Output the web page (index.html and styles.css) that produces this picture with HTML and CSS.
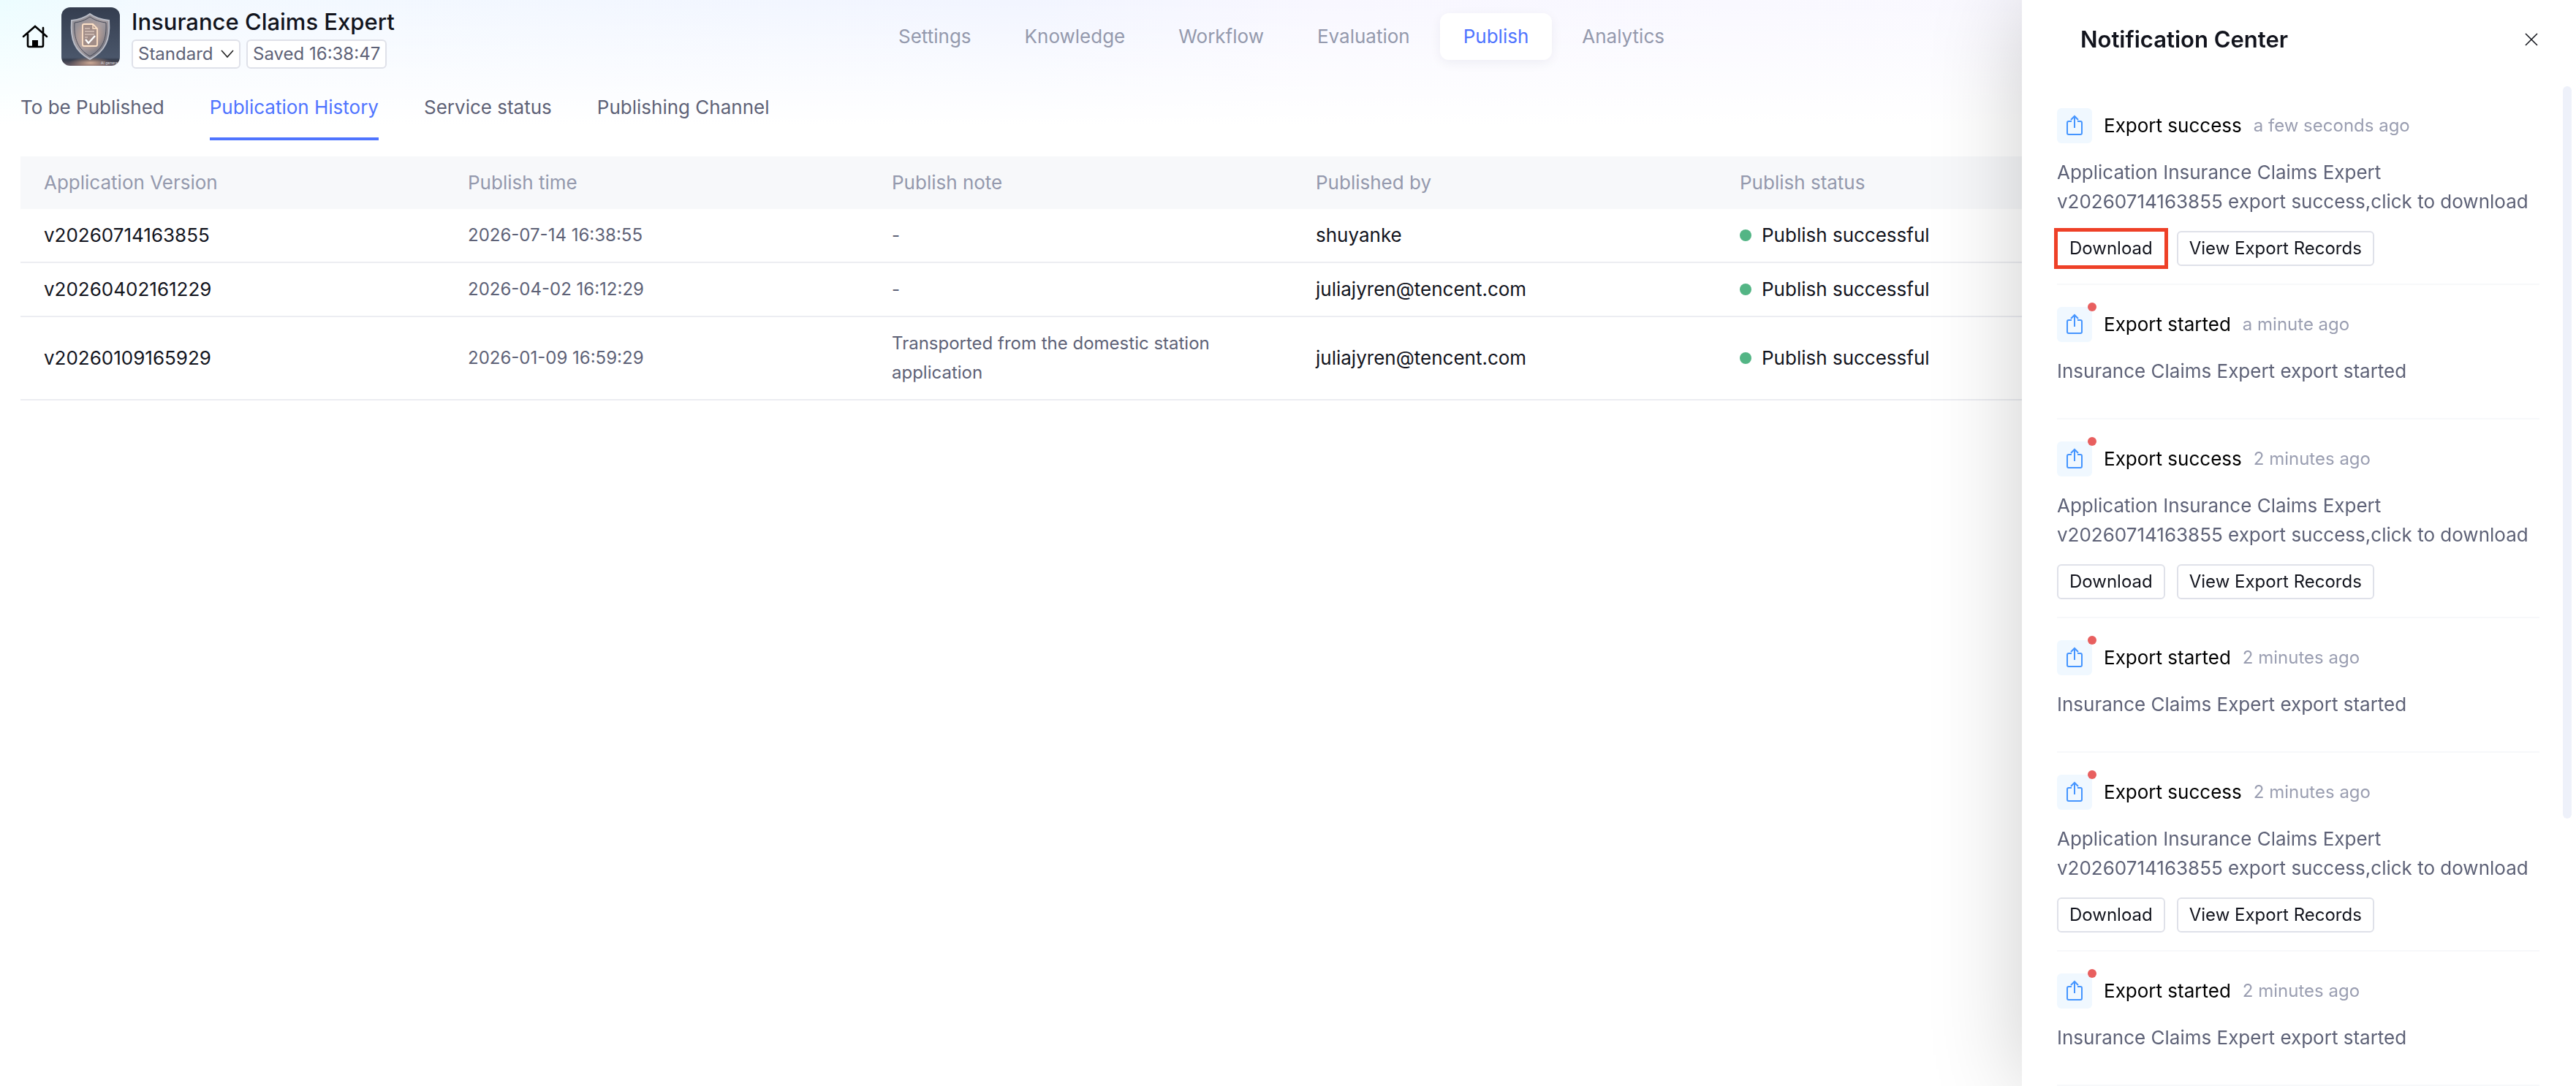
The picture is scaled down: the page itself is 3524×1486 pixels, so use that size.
FILE: index.html
```html
<!DOCTYPE html>
<html lang="en">

<head>
	<meta charset="utf-8">
	<meta name="viewport" content="width=device-width, initial-scale=1" />
	<title>Insurance Claims Expert</title>
	<link rel="stylesheet" href="styles.css">
</head>

<body>
	<!-- shared icons -->
	<svg class="defs" width="0" height="0" aria-hidden="true">
		<symbol id="i-export" viewBox="0 0 48 48">
			<path d="M20 18h-4a2 2 0 0 0-2 2v14a2 2 0 0 0 2 2h16a2 2 0 0 0 2-2V20a2 2 0 0 0-2-2h-4M24 27V11M19 16l5-5 5 5" fill="none" stroke="#4595ff" stroke-width="2"/>
		</symbol>
	</svg>

	<div class="page">
		<header class="top">
			<div class="app">
				<a class="home" href="#" aria-label="Home">
					<svg width="36" height="32" viewBox="0 0 36 32">
						<path d="M2 16L18 2l16 14M29 11V4M8 13v15a2 2 0 0 0 2 2h17a2 2 0 0 0 2-2V13" fill="none" stroke="#000" stroke-width="2.6" stroke-linecap="round"/>
						<path d="M14 21h8v9h-8z"/>
					</svg>
				</a>
				<svg class="avatar" width="80" height="80" viewBox="0 0 80 80" aria-hidden="true">
					<defs>
						<linearGradient id="sky" x1="0" y1="0" x2="0" y2="1">
							<stop offset="0" stop-color="#343d4f"/>
							<stop offset=".86" stop-color="#4a566a"/>
							<stop offset=".9" stop-color="#343b4b"/>
							<stop offset="1" stop-color="#675c66"/>
						</linearGradient>
						<linearGradient id="metal" x1="0" y1="0" x2="1" y2="1">
							<stop offset="0" stop-color="#8b8a92"/>
							<stop offset=".5" stop-color="#a69ea2"/>
							<stop offset="1" stop-color="#5b5f6d"/>
						</linearGradient>
						<radialGradient id="glow">
							<stop offset="0" stop-color="#f0c5a8" stop-opacity=".8"/>
							<stop offset="1" stop-color="#d9a283" stop-opacity="0"/>
						</radialGradient>
					</defs>
					<path fill="url(#sky)" d="M0 0h80v80H0z"/>
					<ellipse cx="40" cy="76" rx="30" ry="8" fill="url(#glow)"/>
					<path d="M39 9c8 6 17 8 26 9 2 26-5 42-26 53C18 60 12 44 14 18c9-1 17-3 25-9z" fill="url(#metal)" stroke="#b9bcc6" stroke-width="2"/>
					<path d="M39 13c7 5 14 7 22 8 1 22-4 36-22 46C22 57 17 43 18 21c8-1 14-3 21-8z" fill="none" stroke="#474b59" stroke-width="1"/>
					<circle cx="39" cy="39" r="22" fill="url(#glow)"/>
					<path d="M31 23h12l6 6v22q0 2-2 2H31q-2 0-2-2V25q0-2 2-2z" fill="#a18d88" stroke="#ffe3c8" stroke-width="1.8"/>
					<path d="M43 23v6h6" fill="none" stroke="#ffe3c8" stroke-width="1.4"/>
					<path d="M32 29h7M32 33h13M32 37h13M32 41h4" stroke="#efdbd0" stroke-width="1.2"/>
					<path d="M33 44l4 5 9-10" fill="none" stroke="#fff" stroke-width="2.4"/>
					<text class="mark" x="54" y="78">AI genera</text>
				</svg>
				<div class="info">
					<h1>Insurance Claims Expert</h1>
					<div class="tags">
						<div class="tag pick">
							<select aria-label="Mode">
								<option>Standard</option>
							</select>
							<svg width="18" height="12" viewBox="0 0 18 12"><path d="M1 1l8 9 8-9" fill="none" stroke="#222" stroke-width="1.6"/></svg>
						</div>
						<span class="tag">Saved 16:38:47</span>
					</div>
				</div>
			</div>
			<nav class="menu">
				<a href="#">Settings</a>
				<a href="#">Knowledge</a>
				<a href="#">Workflow</a>
				<a href="#">Evaluation</a>
				<a href="#" class="on">Publish</a>
				<a href="#">Analytics</a>
			</nav>
		</header>

		<main>
			<nav class="tabs">
				<a href="#">To be Published</a>
				<a href="#" class="on">Publication History</a>
				<a href="#">Service status</a>
				<a href="#">Publishing Channel</a>
			</nav>
			<table>
				<thead>
					<tr>
						<th>Application Version</th>
						<th>Publish time</th>
						<th>Publish note</th>
						<th>Published by</th>
						<th>Publish status</th>
						<th></th>
					</tr>
				</thead>
				<tbody>
					<tr>
						<td>v20260714163855</td>
						<td class="sub">2026-07-14 16:38:55</td>
						<td class="sub">-</td>
						<td>shuyanke</td>
						<td><span class="state">Publish successful</span></td>
						<td></td>
					</tr>
					<tr>
						<td>v20260402161229</td>
						<td class="sub">2026-04-02 16:12:29</td>
						<td class="sub">-</td>
						<td>juliajyren@tencent.com</td>
						<td><span class="state">Publish successful</span></td>
						<td></td>
					</tr>
					<tr>
						<td>v20260109165929</td>
						<td class="sub">2026-01-09 16:59:29</td>
						<td class="sub">Transported from the domestic station application</td>
						<td>juliajyren@tencent.com</td>
						<td><span class="state">Publish successful</span></td>
						<td></td>
					</tr>
				</tbody>
			</table>
		</main>
	</div>

	<aside class="drawer">
		<div class="drawer-head">
			<h2>Notification Center</h2>
			<button class="close" aria-label="Close">
				<svg width="18" height="18" viewBox="0 0 18 18"><path d="M1 1l16 16M17 1L1 17" stroke="#16181f" stroke-width="1.6"/></svg>
			</button>
		</div>
		<div class="drawer-body">
			<ul class="list">
				<li>
					<div class="head">
						<span class="icon"><svg width="48" height="48"><use href="#i-export"/></svg></span>
						<b>Export success</b>
						<time>a few seconds ago</time>
					</div>
					<p>Application Insurance Claims Expert v20260714163855 export success,click to download</p>
					<div class="foot"><button class="marked">Download</button><button>View Export Records</button></div>
				</li>
				<li>
					<div class="head">
						<span class="icon new"><svg width="48" height="48"><use href="#i-export"/></svg></span>
						<b>Export started</b>
						<time>a minute ago</time>
					</div>
					<p>Insurance Claims Expert export started</p>
					<div class="foot"></div>
				</li>
				<li>
					<div class="head">
						<span class="icon new"><svg width="48" height="48"><use href="#i-export"/></svg></span>
						<b>Export success</b>
						<time>2 minutes ago</time>
					</div>
					<p>Application Insurance Claims Expert v20260714163855 export success,click to download</p>
					<div class="foot"><button>Download</button><button>View Export Records</button></div>
				</li>
				<li>
					<div class="head">
						<span class="icon new"><svg width="48" height="48"><use href="#i-export"/></svg></span>
						<b>Export started</b>
						<time>2 minutes ago</time>
					</div>
					<p>Insurance Claims Expert export started</p>
					<div class="foot"></div>
				</li>
				<li>
					<div class="head">
						<span class="icon new"><svg width="48" height="48"><use href="#i-export"/></svg></span>
						<b>Export success</b>
						<time>2 minutes ago</time>
					</div>
					<p>Application Insurance Claims Expert v20260714163855 export success,click to download</p>
					<div class="foot"><button>Download</button><button>View Export Records</button></div>
				</li>
				<li>
					<div class="head">
						<span class="icon new"><svg width="48" height="48"><use href="#i-export"/></svg></span>
						<b>Export started</b>
						<time>2 minutes ago</time>
					</div>
					<p>Insurance Claims Expert export started</p>
					<div class="foot"></div>
				</li>
			</ul>
			<div class="bar"></div>
		</div>
	</aside>
</body>

</html>
```
FILE: styles.css
```css
* {
	box-sizing:border-box;
}

body {
	margin:0;
	height:100vh;
	overflow:hidden;
	font-family:Inter, "Liberation Sans", sans-serif;
	font-size:26px;
	line-height:40px;
	color:#12141d;
	background:#fff;
}

a {
	color:inherit;
	text-decoration:none;
}

button, select {
	font:inherit;
	color:inherit;
	border:0;
	padding:0;
	background:none;
}

svg {
	display:block;
}

.defs {
	position:absolute;
}

.page {
	height:100%;
	background:
		linear-gradient(rgba(255,255,255,0), #fff 170px),
		linear-gradient(90deg, #ecfdff 0, #f3f9ff 200px, #f2f5ff 1400px, #f8f7ff 1800px, #fbfaff);
}

/* top bar */
.top {
	display:grid;
	grid-template-columns:1fr auto 1fr;
	height:100px;
	padding:0 48px 0 30px;
}

.app {
	display:flex;
	align-items:center;
}

.home {
	margin-right:18px;
}

.avatar {
	border-radius:12px;
	margin-right:16px;
}

.mark {
	font-size:5px;
	fill:#d5d7dd;
}

h1 {
	margin:0;
	font-size:31px;
	line-height:40px;
	font-weight:500;
}

.info {
	padding-top:4px;
}

.tags {
	display:flex;
	gap:8px;
	margin-top:4px;
}

.tag {
	display:flex;
	align-items:center;
	height:40px;
	padding:0 7px;
	border:2px solid #dfe1e9;
	border-radius:6px;
	background:#fff;
	color:#5e6277;
	font-size:24px;
	line-height:36px;
}

.pick {
	gap:10px;
}

.pick select {
	appearance:none;
}

.menu {
	display:flex;
	align-items:center;
	gap:9px;
	color:#9499ad;
}

.menu a {
	padding:12px 32px;
	border-radius:12px;
}

.menu .on {
	color:#4f74ff;
	background:#fff;
	box-shadow:0 4px 16px rgba(20,25,60,.06);
}

/* tabs and table */
main {
	padding:0 16px 0 28px;
}

.tabs {
	display:flex;
	gap:62px;
	height:92px;
	margin-bottom:22px;
	color:#5e6277;
}

.tabs a {
	padding-top:27px;
}

.tabs .on {
	color:#4f74ff;
	border-bottom:4px solid #4f74ff;
}

table {
	width:100%;
	table-layout:fixed;
	border-collapse:separate;
	border-spacing:0;
}

th, td {
	padding:16px 32px;
	text-align:left;
	font-weight:400;
}

th {
	color:#9499ad;
	background:#f7f8fa;
}

td {
	border-bottom:2px solid #ecedf2;
}

.sub {
	color:#5e6277;
	font-size:24px;
}

.state {
	display:flex;
	align-items:center;
	gap:14px;
}

.state:before {
	content:"";
	width:16px;
	height:16px;
	border-radius:50%;
	background:#53b585;
}

/* notification drawer, lies over the page */
.drawer {
	position:fixed;
	top:0;
	right:0;
	bottom:0;
	width:758px;
	display:flex;
	flex-direction:column;
	background:#fff;
	box-shadow:0 0 120px rgba(0,0,0,.2);
}

.drawer-head {
	display:flex;
	align-items:center;
	justify-content:space-between;
	height:108px;
	flex:none;
	margin-bottom:10px;
	padding:0 52px 0 80px;
}

h2 {
	margin:0;
	font-size:31px;
	font-weight:600;
}

.drawer-body {
	display:flex;
	flex:1;
	min-height:0;
	overflow:hidden;
	padding:0 6px 0 48px;
}

.list {
	flex:1;
	margin:0 32px 0 0;
	padding:0;
	list-style:none;
}

.list li {
	padding:30px 0 24px;
	border-bottom:2px solid #f7f8fa;
}

.head {
	display:flex;
	align-items:center;
	gap:16px;
}

.head b {
	font-weight:400;
	color:#000;
}

.head time {
	font-size:24px;
	color:#9a9eb1;
}

.icon {
	position:relative;
	width:48px;
	height:48px;
	border-radius:6px;
	background:#f0f8ff;
}

.new:after {
	content:"";
	position:absolute;
	top:-6px;
	right:-6px;
	width:12px;
	height:12px;
	border-radius:50%;
	background:#e85f5f;
}

.list p {
	margin:20px 0;
	color:#5e6277;
}

.foot {
	display:flex;
	gap:16px;
}

.foot button {
	height:48px;
	padding:0 15px;
	border:2px solid #dfe1e9;
	border-radius:6px;
	background:#fff;
	font-size:24px;
}

.foot .marked {
	border-color:#fff;
	border-radius:0;
	outline:5px solid #ee4027;
	outline-offset:-1px;
}

.bar {
	width:12px;
	height:1002px;
	border-radius:6px;
	background:#eef1fa;
}
```
